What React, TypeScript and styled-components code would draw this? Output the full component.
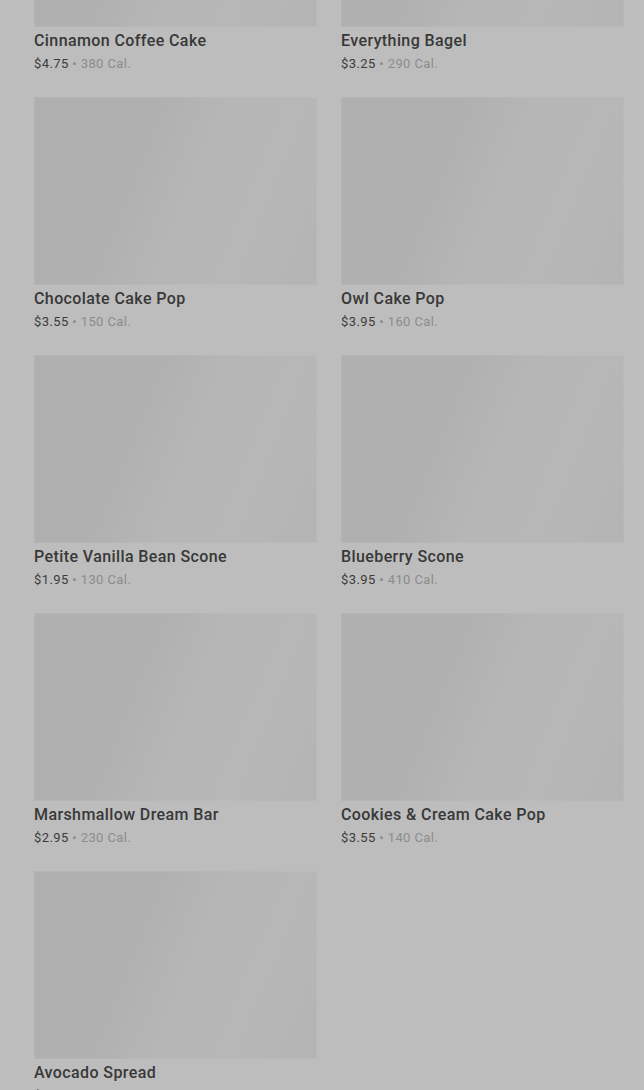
import React from "react";
import styled, { createGlobalStyle } from "styled-components";

const Global = createGlobalStyle`
  html, body { margin: 0; padding: 0; background: #bdbdbd; }
  body { font-family: Roboto, "Noto Sans", "Liberation Sans", sans-serif; overflow: hidden; }
  * { box-sizing: border-box; }
`;

const Page = styled.main`
  width: 644px;
  height: 1090px;
  overflow: hidden;
  background: #bdbdbd;
`;

const Grid = styled.ul`
  list-style: none;
  margin: -161px 0 0 0;
  padding: 0 20px 0 34px;
  display: grid;
  grid-template-columns: 283px 283px;
  column-gap: 24px;
  row-gap: 23px;
`;

const Card = styled.li`
  display: flex;
  flex-direction: column;
`;

const Thumb = styled.div`
  height: 188px;
  background: linear-gradient(112deg, #b0b0b0 0%, #b0b0b0 35%, #b6b6b6 55%, #b7b7b7 75%, #b4b4b4 100%);
  box-shadow: inset 0 0 0 1px rgba(255, 255, 255, 0.05);
`;

const Name = styled.h3`
  margin: 3px 0 0 0;
  font-size: 16px;
  line-height: 22px;
  font-weight: 500;
  color: #383838;
  letter-spacing: 0.4px;
`;

const Meta = styled.p`
  margin: 2px 0 0 0;
  font-size: 13px;
  line-height: 20px;
  color: #3c3c3c;
  letter-spacing: 0.4px;
`;

const Cal = styled.span`
  color: #8c8c8c;
`;

const items = [
  { name: "Cinnamon Coffee Cake", price: "$4.75", cal: 380 },
  { name: "Everything Bagel", price: "$3.25", cal: 290 },
  { name: "Chocolate Cake Pop", price: "$3.55", cal: 150 },
  { name: "Owl Cake Pop", price: "$3.95", cal: 160 },
  { name: "Petite Vanilla Bean Scone", price: "$1.95", cal: 130 },
  { name: "Blueberry Scone", price: "$3.95", cal: 410 },
  { name: "Marshmallow Dream Bar", price: "$2.95", cal: 230 },
  { name: "Cookies & Cream Cake Pop", price: "$3.55", cal: 140 },
  { name: "Avocado Spread", price: "$1.00", cal: 90 },
];

export default function App() {
  return (
    <>
      <Global />
      <Page>
        <Grid>
          {items.map((it) => (
            <Card key={it.name}>
              <Thumb />
              <Name>{it.name}</Name>
              <Meta>
                {it.price}
                <Cal> • {it.cal} Cal.</Cal>
              </Meta>
            </Card>
          ))}
        </Grid>
      </Page>
    </>
  );
}
